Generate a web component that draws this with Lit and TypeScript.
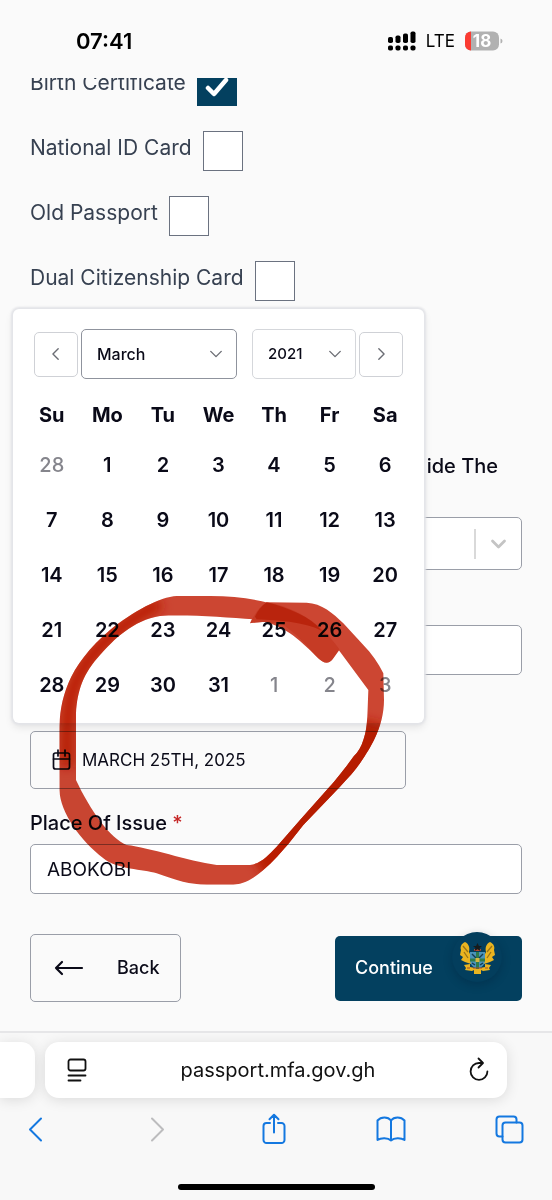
import { LitElement, html, css, svg } from "lit";
import { customElement, state } from "lit/decorators.js";

const WEEKDAYS = ["Su", "Mo", "Tu", "We", "Th", "Fr", "Sa"];

interface Day {
  day: number;
  outside: boolean;
}

const WEEKS: Day[][] = (() => {
  const days: Day[] = [{ day: 28, outside: true }];
  for (let d = 1; d <= 31; d++) days.push({ day: d, outside: false });
  for (let d = 1; d <= 3; d++) days.push({ day: d, outside: true });
  return [0, 1, 2, 3, 4].map((w) => days.slice(w * 7, w * 7 + 7));
})();

const chevron = (d: string) => html`<svg class="chev" viewBox="0 0 16 16" aria-hidden="true">
  <path d=${d} fill="none" stroke="currentColor" stroke-width="1.6" stroke-linecap="round" stroke-linejoin="round" />
</svg>`;

@customElement("status-bar")
class StatusBar extends LitElement {
  static styles = css`
    :host {
      display: flex;
      align-items: center;
      justify-content: space-between;
      height: 78px;
      box-sizing: border-box;
      padding: 4px 49px 0 76px;
      color: #000;
    }
    .time {
      font-size: 22px;
      font-weight: 600;
    }
    .right {
      display: flex;
      align-items: center;
      gap: 10px;
      font-size: 17px;
    }
    .signal {
      width: 28px;
      height: 20px;
    }
    .battery {
      width: 38px;
      height: 20px;
    }
  `;
  render() {
    return html`
      <span class="time">07:41</span>
      <div class="right">
        <svg class="signal" viewBox="0 0 28 20">
          <rect x="0" y="6" width="5" height="6" rx="1.8" />
          <rect x="7.5" y="4.500" width="5" height="7.500" rx="1.8" />
          <rect x="15" y="2.500" width="5" height="9.500" rx="1.8" />
          <rect x="22.5" y="0.500" width="5" height="11.500" rx="1.8" />
          ${[0, 7.5, 15, 22.5].map((x) => svg`<rect x=${x} y="14.5" width="5" height="5" rx="1.8" />`)}
        </svg>
        <span>LTE</span>
        <svg class="battery" viewBox="0 0 38 20">
          <clipPath id="body"><rect x="0" y="0.500" width="34" height="19" rx="6" /></clipPath>
          <g clip-path="url(#body)">
            <rect width="34" height="20" fill="#b1b1b1" />
            <rect width="6" height="20" fill="#fb3b32" />
          </g>
          <path d="M35.500 7.500q2 .5 2 2.500t-2 2.500z" fill="#b1b1b1" />
          <text x="17" y="16" text-anchor="middle" font-size="17" font-weight="700" fill="#fff">18</text>
        </svg>
      </div>
    `;
  }
}

@customElement("date-popup")
class DatePopup extends LitElement {
  static styles = css`
    :host {
      display: block;
      box-sizing: border-box;
      background: #fff;
      border-radius: 6px;
      padding: 20px 11px 11px;
      box-shadow: 0 0 2px 2px #e3e4e8, 0 4px 8px rgba(0, 0, 0, 0.1);
    }
    .head {
      display: flex;
      align-items: center;
      gap: 3px;
      padding: 0 10px;
    }
    button,
    select {
      font: inherit;
      background: #fff;
      color: #0a0a18;
      margin: 0;
    }
    .nav {
      display: grid;
      place-items: center;
      width: 44px;
      height: 45px;
      padding: 0;
      border: 1px solid #cfd1d6;
      border-radius: 5px;
      color: #6b6d74;
    }
    .pick {
      display: grid;
      align-items: center;
      color: #6b6d74;
    }
    .pick > * {
      grid-area: 1 / 1;
    }
    .pick .chev {
      justify-self: end;
      margin-right: 14px;
      pointer-events: none;
    }
    .month {
      flex: 3;
      margin-right: 12px;
    }
    .year {
      flex: 2;
    }
    select {
      appearance: none;
      width: 100%;
      height: 50px;
      padding: 0 15px;
      border: 1px solid #d5d7db;
      border-radius: 5px;
      font-size: 16px;
      font-weight: 500;
    }
    .year select {
      font-size: 15px;
    }
    .month select {
      border-color: #8f939d;
    }
    .chev {
      width: 14px;
      height: 14px;
    }
    table {
      width: 100%;
      margin-top: 14px;
      border-collapse: collapse;
      table-layout: fixed;
    }
    th {
      height: 44px;
      padding: 0;
      font-size: 20px;
      font-weight: 700;
    }
    td {
      height: 55px;
      padding: 0;
      text-align: center;
    }
    .day {
      width: 100%;
      height: 100%;
      padding: 0;
      border: 0;
      font-size: 20px;
      font-weight: 600;
    }
    .outside {
      color: #85858c;
      font-weight: 500;
    }
  `;
  render() {
    return html`
      <div class="head">
        <button class="nav" aria-label="Previous">${chevron("M10.500 2 4.500 8l6 6")}</button>
        <div class="pick month">
          <select aria-label="Month"><option>March</option></select>
          ${chevron("M2 5 8 11l6-6")}
        </div>
        <div class="pick year">
          <select aria-label="Year"><option>2021</option></select>
          ${chevron("M2 5 8 11l6-6")}
        </div>
        <button class="nav" aria-label="Next">${chevron("M5.500 2 11.500 8l-6 6")}</button>
      </div>
      <table>
        <thead>
          <tr>${WEEKDAYS.map((d) => html`<th scope="col">${d}</th>`)}</tr>
        </thead>
        <tbody>
          ${WEEKS.map(
            (week) => html`<tr>
              ${week.map((d) => html`<td><button class="day ${d.outside ? "outside" : ""}">${d.day}</button></td>`)}
            </tr>`
          )}
        </tbody>
      </table>
    `;
  }
}

@customElement("browser-bar")
class BrowserBar extends LitElement {
  static styles = css`
    :host {
      display: block;
      border-top: 2px solid #e6e6e8;
      background: #f8f8f8;
      overflow: hidden;
    }
    .tabs {
      display: flex;
      gap: 10px;
      padding: 9px 45px 0 0;
    }
    .tab {
      height: 56px;
      border-radius: 14px;
      background: #fff;
      box-shadow: 0 2px 14px rgba(0, 0, 0, 0.12);
    }
    .previous {
      width: 35px;
      border-radius: 0 14px 14px 0;
    }
    .current {
      flex: 1;
      display: flex;
      align-items: center;
      justify-content: space-between;
      padding: 0 16px 0 20px;
      font-size: 20px;
      color: #111;
    }
    .icon {
      display: block;
      fill: none;
      stroke: currentColor;
      stroke-width: 2;
      stroke-linecap: round;
      stroke-linejoin: round;
    }
    button {
      padding: 0;
      border: 0;
      background: none;
      color: inherit;
    }
    .small {
      width: 24px;
      height: 26px;
      stroke-width: 1.8;
    }
    .tools {
      display: flex;
      justify-content: space-between;
      align-items: center;
      padding: 14px 27px 0 22px;
      color: #1478e0;
    }
    .tools .icon {
      width: 32px;
      height: 34px;
    }
    .off {
      color: #bcbcbe;
    }
    .home {
      width: 197px;
      height: 6px;
      margin: 38px auto 10px;
      border-radius: 3px;
      background: #000;
    }
  `;
  render() {
    return html`
      <div class="tabs">
        <div class="tab previous"></div>
        <div class="tab current">
          <button aria-label="Page menu">
            <svg class="icon small" viewBox="0 0 24 26">
              <rect x="3.500" y="2.500" width="17" height="11" rx="2" />
              <path d="M3.500 18.500h17M3.500 23.500h12" />
            </svg>
          </button>
          <span>passport.mfa.gov.gh</span>
          <button aria-label="Reload">
            <svg class="icon small" viewBox="0 0 24 26">
              <path d="M15.500 6H12a8.400 8.400 0 1 0 8.400 8.400M11.500 1.500 16 6l-4.500 4.500" />
            </svg>
          </button>
        </div>
      </div>
      <div class="tools">
        <button aria-label="Back">
          <svg class="icon" viewBox="0 0 32 34"><path d="M19 6.500 8 17.500l11 11" /></svg>
        </button>
        <button class="off" aria-label="Forward">
          <svg class="icon" viewBox="0 0 32 34"><path d="M12 6.500 23 17.500l-11 11" /></svg>
        </button>
        <button aria-label="Share">
          <svg class="icon" viewBox="0 0 32 34">
            <path d="M12 11H8.500a3 3 0 0 0-3 3v14a3 3 0 0 0 3 3h15a3 3 0 0 0 3-3V14a3 3 0 0 0-3-3H20M16 20.500V3M11.500 7.300 16 2.800l4.500 4.500" />
          </svg>
        </button>
        <button aria-label="Bookmarks">
          <svg class="icon" viewBox="0 0 32 34">
            <path d="M16 28.500C13 25.500 6 25.500 2.500 28V8.500C6 4.500 13 4.500 16 8.500c3-4 10-4 13.500 0V28c-3.500-2.500-10.500-2.500-13.500.5zM16 8.500v20" />
          </svg>
        </button>
        <button aria-label="Tabs">
          <svg class="icon" viewBox="0 0 32 34">
            <path d="M9.500 24.500h-3a3 3 0 0 1-3-3v-14a3 3 0 0 1 3-3h14a3 3 0 0 1 3 3v3" />
            <rect x="9.500" y="10.500" width="20" height="20" rx="3" />
          </svg>
        </button>
      </div>
      <div class="home"></div>
    `;
  }
}

@customElement("app-root")
class AppRoot extends LitElement {
  static styles = css`
    :host {
      display: flex;
      flex-direction: column;
      min-height: 100vh;
      box-sizing: border-box;
      position: relative;
      isolation: isolate;
      background: #fafafa;
      color: #0a0a18;
      font-family: Inter, "Open Sans", sans-serif;
      font-size: 20px;
      line-height: 24px;
    }
    main {
      flex: 1;
      overflow: hidden;
      padding: 0 30px;
    }
    .documents {
      display: flex;
      flex-direction: column;
      gap: 25px;
      margin-top: -12px;
    }
    .document {
      display: flex;
      gap: 11px;
      align-items: center;
      color: #374151;
      height: 40px;
      font-size: 21px;
    }
    .document span {
      padding-bottom: 6px;
    }
    .document input {
      appearance: none;
      width: 40px;
      height: 40px;
      margin: 0;
      border: 1px solid #6b7280;
      background: #fff;
    }
    .document input:checked {
      border-color: #03405f;
      background: #03405f;
    }
    .tick {
      display: grid;
    }
    .tick > * {
      grid-area: 1 / 1;
    }
    .tick svg {
      width: 40px;
      height: 40px;
      pointer-events: none;
    }
    .field {
      display: flex;
      flex-direction: column;
    }
    .country {
      margin-top: 153px;
      gap: 39px;
    }
    .country label {
      text-align: right;
      padding-right: 24px;
      font-weight: 500;
    }
    .choice {
      display: grid;
      align-items: center;
    }
    .choice > * {
      grid-area: 1 / 1;
    }
    .choice svg {
      justify-self: end;
      width: 48px;
      height: 32px;
      pointer-events: none;
    }
    .box {
      box-sizing: border-box;
      width: 100%;
      height: 50px;
      margin: 0;
      padding: 0 16px;
      border: 1px solid #9a9ea8;
      border-radius: 5px;
      background: #fff;
      color: inherit;
      font: inherit;
      font-size: 19px;
      appearance: none;
    }
    .choice .box {
      height: 53px;
    }
    .number {
      margin-top: 55px;
    }
    .date {
      position: relative;
      width: calc(100% - 116px);
      margin-top: 56px;
    }
    .trigger {
      display: flex;
      align-items: center;
      gap: 9px;
      height: 58px;
      padding: 0 20px;
      background: transparent;
      font-size: 17px;
    }
    .trigger svg {
      width: 22px;
      height: 24px;
    }
    .popup {
      position: absolute;
      left: -17px;
      right: -18px;
      bottom: calc(100% + 8px);
    }
    .place {
      margin-top: 22px;
      gap: 9px;
    }
    .place label {
      font-weight: 500;
    }
    .star {
      color: #c62828;
    }
    .actions {
      display: flex;
      justify-content: space-between;
      align-items: center;
      margin: 40px 0 28px;
    }
    .button {
      display: flex;
      align-items: center;
      border-radius: 5px;
      font: inherit;
      font-size: 18px;
      font-weight: 500;
    }
    .back {
      gap: 33px;
      height: 68px;
      padding: 0 20px 0 23px;
      border: 1px solid #9a9ea8;
      background: transparent;
      color: inherit;
    }
    .back svg {
      width: 30px;
      height: 18px;
    }
    .next {
      position: relative;
      flex: 0 0 187px;
    }
    .continue {
      width: 100%;
      height: 65px;
      padding: 0 20px;
      border: 0;
      background: #03405f;
      color: #fff;
    }
    .crest {
      position: absolute;
      right: 20px;
      top: -4px;
      width: 50px;
      height: 50px;
      padding: 0;
      border: 0;
      border-radius: 50%;
      background: #033e5d;
      box-shadow: 0 3px 8px rgba(0, 20, 45, 0.25);
    }
    .crest svg {
      display: block;
      width: 50px;
      height: 50px;
    }
    .marker {
      position: absolute;
      left: 0;
      top: 580px;
      width: 440px;
      height: 340px;
      mix-blend-mode: multiply;
      pointer-events: none;
    }
  `;

  @state() private documents = [
    { id: "birth", label: "Birth Certificate", checked: true },
    { id: "national", label: "National ID Card", checked: false },
    { id: "passport", label: "Old Passport", checked: false },
    { id: "dual", label: "Dual Citizenship Card", checked: false },
  ];

  private toggle(id: string) {
    this.documents = this.documents.map((d) => (d.id === id ? { ...d, checked: !d.checked } : d));
  }

  private crest() {
    return html`<svg viewBox="0 0 50 50" aria-hidden="true">
      <g fill="#eab420">
        <path d="M13 10c-4 2-5 5-4 8l-1 5 3 2-2 3 4 2 6 2 1-6-3-6c1-4 0-8-4-10z" />
        <path d="M38 10c4 2 5 5 4 8l1 5-3 2 2 3-4 2-6 2-1-6 3-6c-1-4 0-8 4-10z" />
        <path d="M12 33l6-1v3l5 1h5l5-1v-3l6 1-2 3 1 2-7 1-2-1v4h-7v-4l-2 1-7-1 1-2z" />
      </g>
      <path d="M11 14l5 6M12 20l4 6M40 14l-5 6M39 20l-4 6" stroke="#9a7416" stroke-width="1.300" />
      <path d="M18 20h15v9q-1 6-7.500 8Q19 35 18 29z" fill="#4a93bb" />
      <path d="M25.500 20v17M18 28h15" stroke="#2f7c4d" stroke-width="3" />
      <path d="M20 22l4 4M31 22l-4 4M20 31l3 2M31 31l-3 2" stroke="#163c50" stroke-width="1.400" />
      <rect x="23.500" y="26" width="4" height="4" fill="#d5b642" />
      <path d="M22 18h7" stroke="#b74a32" stroke-width="2" />
      <path d="M25.500 11l1.400 3h3.100l-2.500 2 1 3-3-1.800-3 1.800 1-3-2.500-2h3.100z" fill="#171b1b" />
      <path d="M21 36h9M15 36h3M33 36h3" stroke="#a64b26" stroke-width="1" />
    </svg>`;
  }

  private marker() {
    return html`<svg class="marker" viewBox="0 0 1320 1020" aria-hidden="true">
      <defs>
        <filter id="soft" x="-20%" y="-20%" width="140%" height="140%"><feGaussianBlur stdDeviation="16" /></filter>
        <clipPath id="ring">
          <path
            d="M1018 210C990 170 960 140 920 115C850 75 760 48 630 48L530 48C480 50 400 95 330 150C270 200 225 260 205 310C185 360 178 400 178 460L178 630C182 700 240 780 310 835C350 868 430 868 470 880C530 902 570 914 620 914L700 914C740 912 765 890 790 870C820 845 845 815 865 792L910 735L1020 620C1045 594 1065 572 1080 550C1100 520 1112 500 1122 480C1142 440 1152 400 1152 360L1150 280C1135 250 1115 220 1090 195L1030 130C1000 100 965 70 920 68L800 67C775 80 760 105 750 130C790 124 810 126 830 130C880 125 920 135 945 145C980 165 1000 190 1020 215L1105 330L1102 410C1100 440 1097 460 1090 480C1084 500 1075 515 1060 530C1030 572 1005 603 980 630L900 720L830 800C805 825 785 850 750 855L650 855C560 842 450 803 380 795C330 775 270 690 228 600L228 400C232 330 250 280 300 225C340 180 400 120 480 108C560 103 680 112 760 118C850 132 895 175 950 230Q980 262 998 238Z"
          />
        </clipPath>
      </defs>
      <g clip-path="url(#ring)">
        <rect width="1320" height="1020" fill="#cc4632" />
        <g fill="none" stroke="#b91a00" filter="url(#soft)">
          <path d="M480 70C370 125 250 220 215 340C200 400 200 480 200 560" stroke-width="36" />
          <path d="M1130 430C1100 540 980 650 900 740C840 810 820 840 780 866" stroke-width="90" />
        </g>
        <path d="M750 130C765 100 780 78 800 67C900 85 970 140 1018 208L998 238Q978 262 950 232C925 200 890 160 840 128Z" fill="#c02f18" opacity="0.5" />
        <path d="M765 110C775 90 785 78 800 67C870 85 930 110 965 152C910 125 840 122 770 118Z" fill="#b51f08" opacity="0.8" />
      </g>
    </svg>`;
  }

  render() {
    return html`
      <status-bar></status-bar>
      <main>
        <div class="documents">
          ${this.documents.map(
            (d) => html`<label class="document">
              <span>${d.label}</span>
              <div class="tick">
                <input type="checkbox" .checked=${d.checked} @change=${() => this.toggle(d.id)} />
                ${d.checked
                  ? html`<svg viewBox="0 0 40 40">
                      <path d="M11 22l6 6 12-14" fill="none" stroke="#fff" stroke-width="4.500" stroke-linecap="round" stroke-linejoin="round" />
                    </svg>`
                  : ""}
              </div>
            </label>`
          )}
        </div>
        <div class="field country">
          <label for="country">ide The</label>
          <div class="choice">
            <select class="box" id="country"></select>
            <svg viewBox="0 0 48 32">
              <path d="M1 1v30" stroke="#ccc" stroke-width="1.500" />
              <path d="M18.500 13l6 6 6-6" fill="none" stroke="#c4c4c4" stroke-width="2.800" stroke-linecap="round" stroke-linejoin="round" />
            </svg>
          </div>
        </div>
        <div class="field number"><input class="box" type="text" aria-label="Number" /></div>
        <div class="date">
          <button class="box trigger">
            <svg viewBox="0 0 22 24" fill="none" stroke="currentColor" stroke-width="1.700" stroke-linecap="round">
              <rect x="2.500" y="5" width="16" height="16" rx="2" />
              <path d="M2.500 11h16M7 2v6M14 2v6" />
            </svg>
            <span>MARCH 25TH, 2025</span>
          </button>
          <date-popup class="popup"></date-popup>
        </div>
        <div class="field place">
          <label for="place">Place Of Issue <span class="star">*</span></label>
          <input class="box" id="place" type="text" .value=${"ABOKOBI"} />
        </div>
        <div class="actions">
          <button class="button back">
            <svg viewBox="0 0 30 18" fill="none" stroke="currentColor" stroke-width="2.200" stroke-linecap="round" stroke-linejoin="round">
              <path d="M28 9H2M8 3L2 9l6 6" />
            </svg>
            Back
          </button>
          <div class="next">
            <button class="button continue">Continue</button>
            <button class="crest" aria-label="Crest">${this.crest()}</button>
          </div>
        </div>
      </main>
      <browser-bar></browser-bar>
      ${this.marker()}
    `;
  }
}
